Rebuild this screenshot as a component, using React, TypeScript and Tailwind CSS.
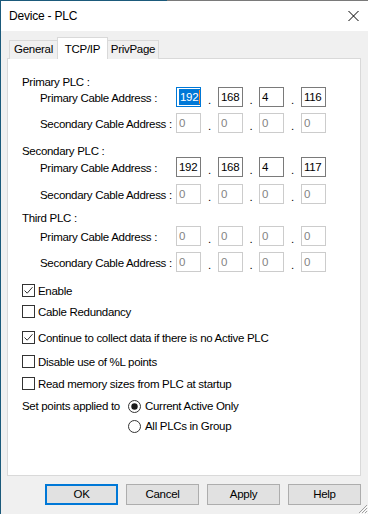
import React from "react";

const font = { fontFamily: '"Liberation Sans", Arial, sans-serif' };

function Box({ v, disabled, selected }: { v: string; disabled?: boolean; selected?: boolean }) {
  return (
    <div
      className={
        "relative w-[25px] h-[20px] bg-white flex items-center pl-[2px] leading-[14px] " +
        (selected
          ? "border border-[#0078d7] text-white"
          : disabled
          ? "border border-[#cccccc] text-[#838383]"
          : "border border-[#7a7a7a] text-black")
      }
    >
      {selected ? (
        <span className="bg-[#0078d7] text-white px-[1px] leading-[16px] flex items-center">
          {v}
          <span className="inline-block w-[1px] h-[14px] bg-[#ff8728] ml-[1px]" />
        </span>
      ) : (
        <span>{v}</span>
      )}
    </div>
  );
}

function Dot({ narrow }: { narrow?: boolean }) {
  return (
    <div
      className={
        (narrow ? "w-[16px]" : "w-[17px]") +
        " h-[20px] flex items-end justify-center pb-[2px] leading-[12px] text-black"
      }
    >
      <span className="relative top-[1px]">.</span>
    </div>
  );
}

function AddrRow({ label, vals, disabled, selectedFirst, className }: { label: string; vals: string[]; disabled?: boolean; selectedFirst?: boolean; className?: string }) {
  return (
    <div className={"flex items-center h-[20px] pl-[18px] " + (className || "")}>
      <div className="w-[136px] leading-[14px] text-black whitespace-nowrap relative top-[1px]">{label}</div>
      <Box v={vals[0]} disabled={disabled} selected={selectedFirst} />
      <Dot />
      <Box v={vals[1]} disabled={disabled} />
      <Dot narrow />
      <Box v={vals[2]} disabled={disabled} />
      <Dot />
      <Box v={vals[3]} disabled={disabled} />
    </div>
  );
}

function Check({ label, checked, className }: { label: string; checked?: boolean; className?: string }) {
  return (
    <div className={"flex items-center h-[13px] " + (className || "")}>
      <div className="w-[13px] h-[13px] border border-[#333333] bg-white flex items-center justify-center">
        {checked && (
          <svg width="11" height="11" viewBox="0 0 11 11">
            <path d="M1.5 5.5 L4.2 8.2 L9.5 2.2" fill="none" stroke="#333333" strokeWidth="1" />
          </svg>
        )}
      </div>
      <span className="ml-[3px] leading-[14px] text-black whitespace-nowrap">{label}</span>
    </div>
  );
}

function Radio({ checked }: { checked?: boolean }) {
  return (
    <svg width="13" height="13" viewBox="0 0 13 13">
      <circle cx="6.5" cy="6.5" r="6" fill="white" stroke="#333333" strokeWidth="1" />
      {checked && <circle cx="6.5" cy="6.5" r="3.2" fill="#1a1a1a" />}
    </svg>
  );
}

function Btn({ label, primary }: { label: string; primary?: boolean }) {
  return (
    <div
      className={
        "w-[73px] h-[21px] bg-[#e1e1e1] flex items-center justify-center text-black " +
        (primary ? "border-2 border-[#0078d7]" : "border border-[#adadad]")
      }
    >
      {label}
    </div>
  );
}

export default function App() {
  return (
    <div
      className="w-[368px] h-[514px] relative overflow-hidden bg-[#f0f0f0] flex flex-col text-[11.5px] tracking-[-0.3px]"
      style={font}
    >
      {/* top border */}
      <div className="flex h-[1px] shrink-0">
        <div className="w-[167px] bg-[#1b5a7b]" />
        <div className="flex-1 bg-[#7a7a7a]" />
      </div>
      <div className="flex flex-1 min-h-0">
        <div className="w-[1px] bg-[#1b5a7b] shrink-0" />
        <div className="flex-1 flex flex-col">
          {/* title bar */}
          <div className="h-[30px] bg-white flex items-center justify-between pl-[8px] pr-[9px] shrink-0">
            <span className="text-[12px] tracking-[-0.2px] text-black">Device - PLC</span>
            <svg width="11" height="10" viewBox="0 0 11 10">
              <path d="M0.5 0 L10.5 10 M10.5 0 L0.5 10" stroke="#000" strokeWidth="1" />
            </svg>
          </div>
          {/* tabs */}
          <div className="flex items-end h-[28px] pl-[8px] relative z-10 shrink-0 mb-[-1px]">
            <div className="w-[48px] h-[19px] border border-[#d9d9d9] border-b-0 border-r-0 bg-[#f0f0f0] flex items-center justify-center text-black">
              General
            </div>
            <div className="w-[51px] h-[22px] border border-[#d9d9d9] border-b-0 bg-white flex items-start justify-center pt-[3px] text-black">
              TCP/IP
            </div>
            <div className="w-[51px] h-[19px] border border-[#d9d9d9] border-b-0 border-l-0 bg-[#f0f0f0] flex items-center justify-center text-black">
              PrivPage
            </div>
          </div>
          {/* panel */}
          <div className="ml-[6px] w-[354px] h-[418px] border border-[#d9d9d9] bg-white pl-[14px] shrink-0">
            <div className="h-[11px] mt-[17px] flex items-center text-black relative top-[1px]">Primary PLC :</div>
            <AddrRow label="Primary Cable Address :" vals={["192", "168", "4", "116"]} selectedFirst />
            <AddrRow label="Secondary Cable Address :" vals={["0", "0", "0", "0"]} disabled className="mt-[6px]" />
            <div className="h-[11px] mt-[13px] flex items-center text-black">Secondary PLC :</div>
            <AddrRow label="Primary Cable Address :" vals={["192", "168", "4", "117"]} />
            <AddrRow label="Secondary Cable Address :" vals={["0", "0", "0", "0"]} disabled className="mt-[7px]" />
            <div className="h-[11px] mt-[9px] flex items-center text-black">Third PLC :</div>
            <AddrRow label="Primary Cable Address :" vals={["0", "0", "0", "0"]} disabled className="mt-[2px]" />
            <AddrRow label="Secondary Cable Address :" vals={["0", "0", "0", "0"]} disabled className="mt-[6px]" />
            <Check label="Enable" checked className="mt-[12px]" />
            <Check label="Cable Redundancy" className="mt-[8px]" />
            <Check label="Continue to collect data if there is no Active PLC" checked className="mt-[13px]" />
            <Check label="Disable use of %L points" className="mt-[11px]" />
            <Check label="Read memory sizes from PLC at startup" className="mt-[9px]" />
            <div className="flex items-center h-[13px] mt-[10px]">
              <span className="w-[106px] text-black whitespace-nowrap">Set points applied to</span>
              <Radio checked />
              <span className="ml-[4px] text-black whitespace-nowrap">Current Active Only</span>
            </div>
            <div className="flex items-center h-[13px] mt-[7px] pl-[106px]">
              <Radio />
              <span className="ml-[4px] text-black whitespace-nowrap">All PLCs in Group</span>
            </div>
          </div>
          {/* buttons */}
          <div className="flex gap-[8px] pl-[44px] mt-[8px]">
            <Btn label="OK" primary />
            <Btn label="Cancel" />
            <Btn label="Apply" />
            <Btn label="Help" />
          </div>
        </div>
      </div>
      {/* resize grip */}
      <svg className="absolute right-0 bottom-0" width="12" height="12" viewBox="0 0 12 12">
        <path d="M11 3 L3 11 M11 6 L6 11 M11 9 L9 11" stroke="#a0a0a0" strokeWidth="1" />
        <path d="M12 4 L4 12 M12 7 L7 12 M12 10 L10 12" stroke="#ffffff" strokeWidth="1" />
      </svg>
    </div>
  );
}
